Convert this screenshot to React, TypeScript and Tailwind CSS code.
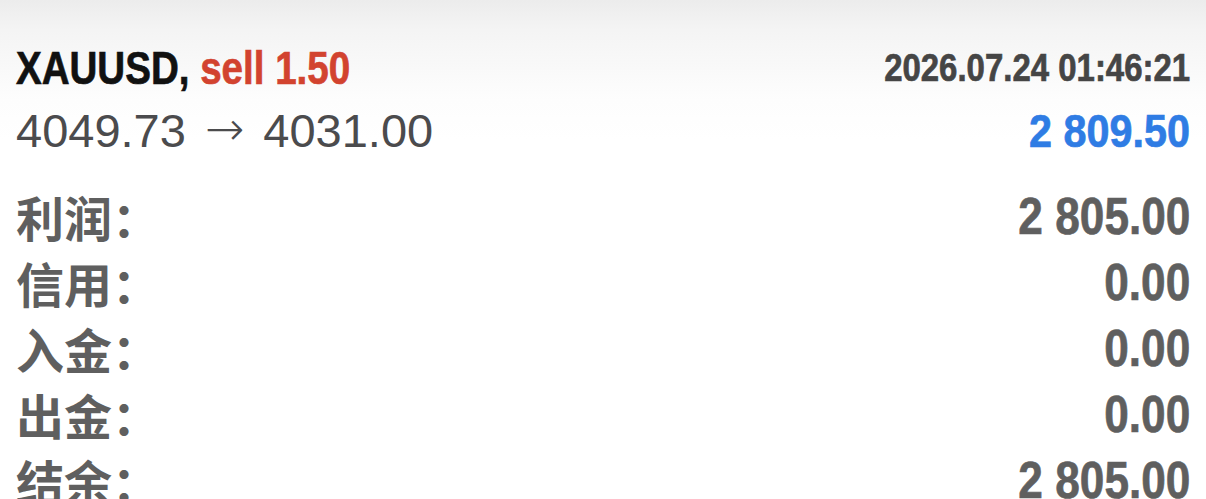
import React from 'react';

interface Row {
  label: string;
  value: string;
}

const rows: Row[] = [
  { label: '利润', value: '2 805.00' },
  { label: '信用', value: '0.00' },
  { label: '入金', value: '0.00' },
  { label: '出金', value: '0.00' },
  { label: '结余', value: '2 805.00' },
];

// bold sans squeezed horizontally to get the condensed numerals
const cond =
  "font-['Liberation_Sans',Arial,sans-serif] font-bold leading-none inline-block [-webkit-text-stroke:0.7px_currentColor]";

const App: React.FC = () => {
  return (
    <div className="w-[1206px] h-[499px] overflow-hidden bg-[linear-gradient(to_bottom,#ececec_0px,#f4f4f4_30px,#fdfdfd_100px,#ffffff_140px)]">
      <div className="px-4 pt-[36px]">
        <div className="h-[62px] flex items-center justify-between">
          <div className={`${cond} text-[47px] origin-left scale-x-[0.82] whitespace-nowrap`}>
            <span className="text-[#111111]">XAUUSD, </span>
            <span className="text-[#d2432f]">sell 1.50</span>
          </div>
          <div className={`${cond} text-[39px] origin-right scale-x-[0.845] text-[#454545] whitespace-nowrap`}>
            2026.07.24 01:46:21
          </div>
        </div>
        <div className="h-[64px] flex items-center justify-between">
          <div className="font-['Liberation_Sans',sans-serif] text-[47px] leading-none text-[#4b4b4d] whitespace-nowrap">
            4049.73
            <span className="font-['DejaVu_Sans',sans-serif] font-light mx-[19px] relative -top-[2px]">→</span>
            4031.00
          </div>
          <div className={`${cond} text-[47px] origin-right scale-x-[0.88] text-[#2f7ce4] whitespace-nowrap`}>
            2 809.50
          </div>
        </div>

        <div className="mt-[21px]">
          {rows.map((row) => (
            <div key={row.label} className="h-[66px] flex items-center justify-between text-[#5f5f5f]">
              <div className="font-['Noto_Sans_CJK_SC',sans-serif] font-bold text-[48px] leading-none">
                {row.label}：
              </div>
              <div className={`${cond} text-[52px] origin-right scale-x-[0.85] whitespace-nowrap`}>{row.value}</div>
            </div>
          ))}
        </div>
      </div>
    </div>
  );
};

export default App;
